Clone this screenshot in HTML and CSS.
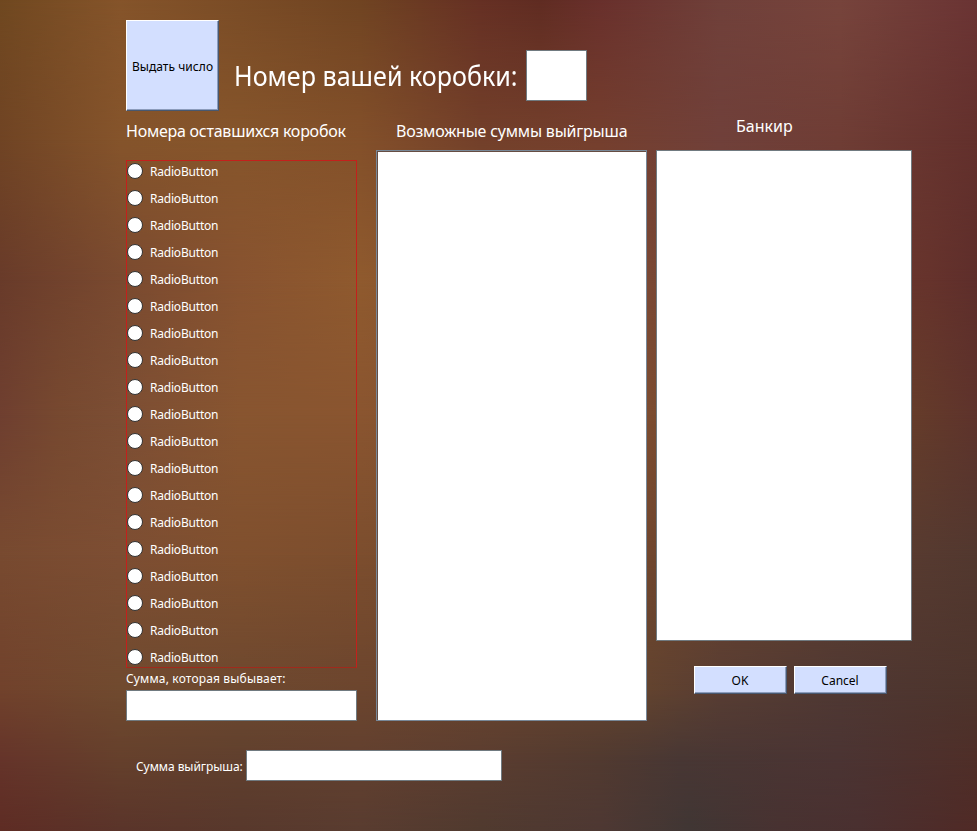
FILE: index.html
```
<!DOCTYPE html>
<html lang="ru">
<head>
<meta charset="utf-8">
<title>Номер вашей коробки</title>
<link rel="stylesheet" href="styles.css">
</head>
<body>
<div class="backdrop">
<div class="band b1"></div><div class="band b2"></div><div class="band b3"></div><div class="band b4"></div>
<div class="band b5"></div><div class="band b6"></div><div class="band b7"></div><div class="band b8"></div>
</div>
<main class="form">
<header class="top">
<button class="button issue"><span class="t-issue">Выдать число</span></button>
<h1><span class="t-title">Номер вашей коробки:</span></h1>
<div class="field number"></div>
</header>
<div class="columns">
<section class="left">
<h2><span class="t-left">Номера оставшихся коробок</span></h2>
<div class="radios">
<label><i></i><span>RadioButton</span></label>
<label><i></i><span>RadioButton</span></label>
<label><i></i><span>RadioButton</span></label>
<label><i></i><span>RadioButton</span></label>
<label><i></i><span>RadioButton</span></label>
<label><i></i><span>RadioButton</span></label>
<label><i></i><span>RadioButton</span></label>
<label><i></i><span>RadioButton</span></label>
<label><i></i><span>RadioButton</span></label>
<label><i></i><span>RadioButton</span></label>
<label><i></i><span>RadioButton</span></label>
<label><i></i><span>RadioButton</span></label>
<label><i></i><span>RadioButton</span></label>
<label><i></i><span>RadioButton</span></label>
<label><i></i><span>RadioButton</span></label>
<label><i></i><span>RadioButton</span></label>
<label><i></i><span>RadioButton</span></label>
<label><i></i><span>RadioButton</span></label>
<label><i></i><span>RadioButton</span></label>
</div>
<div class="caption"><span class="t-out">Сумма, которая выбывает:</span></div>
<div class="field removed"></div>
</section>
<section class="middle">
<h2><span class="t-mid">Возможные суммы выйгрыша</span></h2>
<div class="field list"></div>
</section>
<section class="right">
<h2><span class="t-bank">Банкир</span></h2>
<div class="field memo"></div>
<div class="actions"><button class="button">OK</button><button class="button">Cancel</button></div>
</section>
</div>
<footer class="prize"><span class="t-prize">Сумма выйгрыша:</span><div class="field win"></div></footer>
</main>
</body>
</html>
```
FILE: styles.css
```
* { box-sizing: border-box; }
body { margin: 0; width: 977px; height: 831px; overflow: hidden; font: 12px/16px "Noto Sans", sans-serif; color: #fff; background: #75482f; }
/* Colour field: each band fades in over the one above it. */
.backdrop { position: absolute; inset: 0; z-index: -1; }
.band { position: absolute; inset: 0; mask-image: linear-gradient(transparent var(--from), #000 var(--to)); }
.b1 { mask-image: none; background: linear-gradient(90deg, #704820 0, #85542a 120px, #7a4c26 240px, #704422 360px, #663024 480px, #602c22 540px, #69302c 600px, #70403a 720px, #77443c 840px, #6b3434 977px); }
.b2 { --from: 0px; --to: 140px; background: linear-gradient(90deg, #704424 0, #85542b 120px, #86552b 240px, #83502a 360px, #73402a 480px, #753f2e 600px, #70403a 720px, #6f3d35 840px, #63302c 977px); }
.b3 { --from: 140px; --to: 280px; background: linear-gradient(90deg, #693b2a 0, #7a4a30 120px, #885330 240px, #8f5a2e 360px, #7a4834 650px, #66332c 930px, #5e2e2b 977px); }
.b4 { --from: 280px; --to: 415px; background: linear-gradient(90deg, #6f3f30 0, #774930 60px, #7c4e34 120px, #885530 240px, #8a5530 360px, #7c4c30 650px, #653c2a 915px, #5e332c 977px); }
.b5 { --from: 415px; --to: 555px; background: linear-gradient(90deg, #784a30 0, #7d4e33 120px, #80502e 240px, #7c4e2e 360px, #70462e 650px, #563a30 930px, #52382f 977px); }
.b6 { --from: 555px; --to: 690px; background: linear-gradient(90deg, #71422c 0, #704a2f 120px, #6d482f 240px, #6c452e 360px, #62432f 650px, #583d33 720px, #4f3833 840px, #4d342c 977px); }
.b7 { --from: 690px; --to: 760px; background: linear-gradient(90deg, #65342a 0, #65402c 120px, #60402e 240px, #62402f 360px, #5b3d30 480px, #513a30 600px, #483734 680px, #4b3433 840px, #4f2e28 977px); }
.b8 { --from: 760px; --to: 831px; background: linear-gradient(90deg, #5e2c24 0, #5a342a 120px, #58382c 240px, #593c30 360px, #503a2f 480px, #4e3833 600px, #403634 690px, #483231 780px, #4a3030 860px, #502a26 977px); }
.form { padding: 20px 0 0 126px; }
.form span { display: inline-block; white-space: nowrap; }
h1, h2 { margin: 0; font-weight: 400; }
.top { display: flex; height: 91px; }
h1 { width: 292px; margin: 37px 0 0 15px; font-size: 27px; line-height: 38px; }
.t-title { transform: scaleX(.93); transform-origin: 0 0; }
.t-issue { letter-spacing: .05px; }
.t-left { letter-spacing: -.24px; }
.t-mid { letter-spacing: -.21px; }
.t-out { letter-spacing: .16px; }
.t-prize { letter-spacing: -.06px; }
.field { background: #fff; border: 1px solid #707a80; }
.number { width: 61px; height: 51px; margin: 30px 0 0; }
.button { font: inherit; color: #000; width: 93px; height: 28px; padding: 2px 1px 0 0; background: #d3dfff; border: 1px solid; border-color: #fff #485870 #485870 #fff; box-shadow: inset -1px -1px #8c9cbc; }
.issue { height: 91px; padding: 2px 0 0; }
.columns { display: flex; }
h2 { font-size: 16px; line-height: 24px; height: 40px; padding-top: 8px; }
.left { width: 231px; }
.left h2 { height: 49px; }
.radios { height: 508px; border: 1px solid #c4201c; border-bottom-color: #a02a1c; }
.radios label { display: flex; align-items: center; height: 19px; margin-bottom: 8px; gap: 7px; letter-spacing: -.2px; }
.radios span { padding-top: 2px; }
.radios i { width: 16px; height: 16px; border: 1px solid #333; border-radius: 50%; background: #fff; }
.caption { height: 22px; padding-top: 3px; }
.removed { height: 31px; }
.middle { width: 271px; margin-left: 19px; }
.middle h2 { height: 39px; padding-left: 20px; }
.list { height: 571px; border-color: #788898; box-shadow: inset 1px 1px #664d42; }
.right { width: 256px; margin-left: 9px; }
.right h2 { height: 39px; padding: 3px 0 0 80px; }
.memo { height: 491px; }
.actions { display: flex; gap: 7px; padding: 25px 0 0 38px; }
.prize { display: flex; padding: 29px 0 0 10px; }
.prize > span { width: 110px; margin-top: 9px; }
.win { width: 256px; height: 31px; }
```
